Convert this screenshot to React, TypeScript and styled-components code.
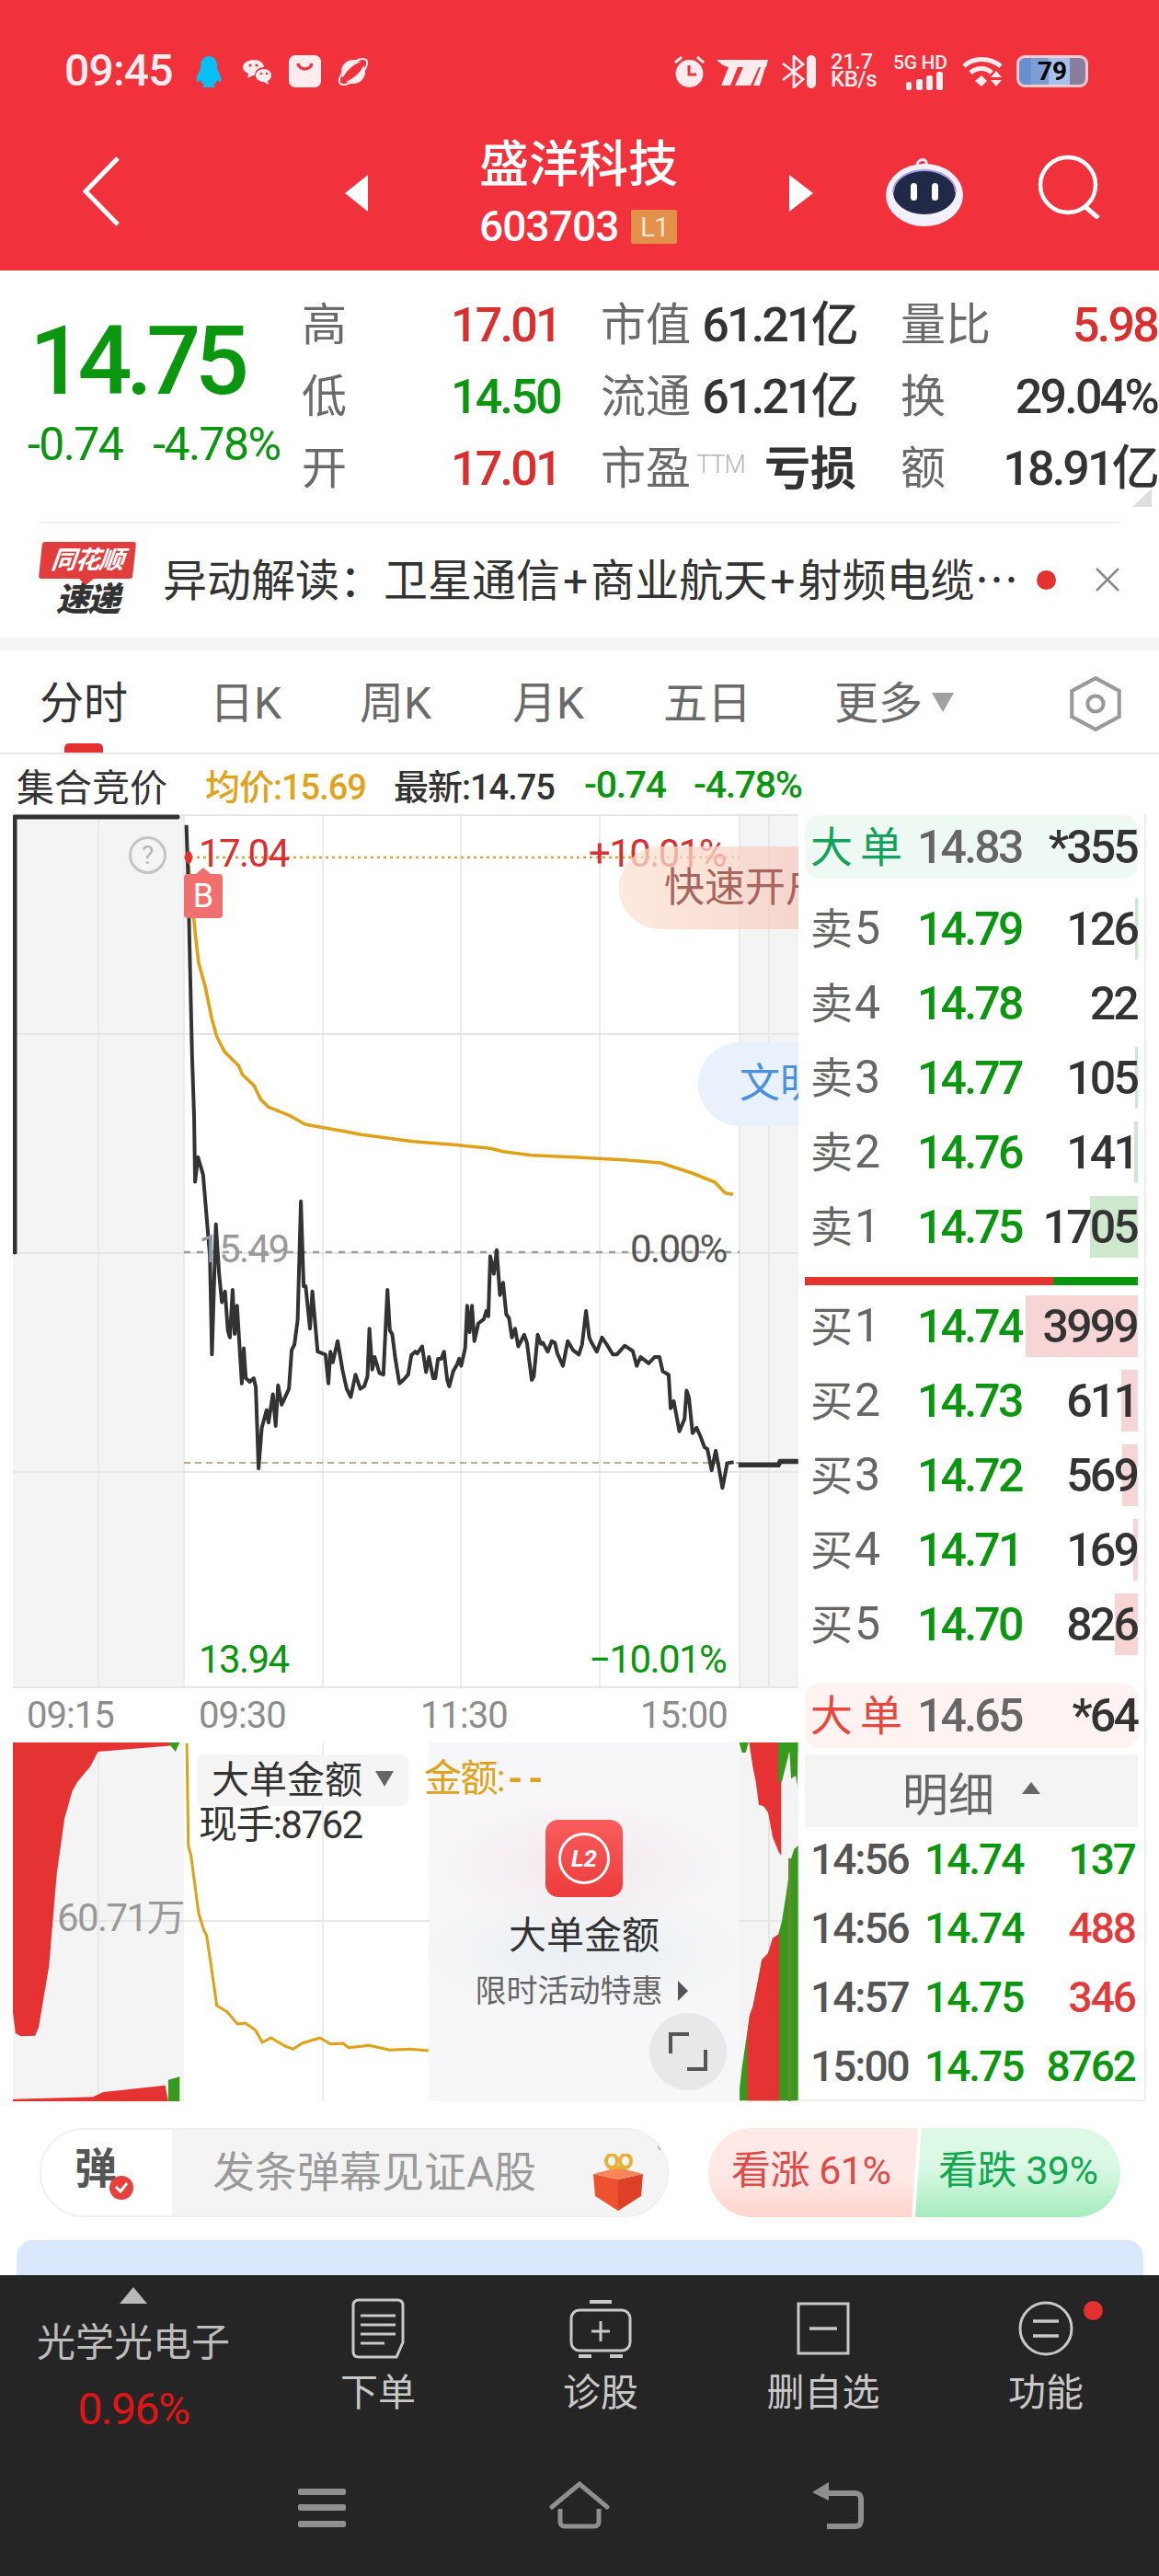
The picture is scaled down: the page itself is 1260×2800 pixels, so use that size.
import React from 'react';
import styled, { createGlobalStyle, css } from 'styled-components';

const GlobalStyle = createGlobalStyle`
  html, body { margin: 0; padding: 0; background: #fff; }
  * { box-sizing: border-box; }
`;

const RED = '#d9302f';
const GREEN = '#0a960f';

const num = css`
  font-size: 50px;
  font-weight: 500;
  letter-spacing: -2.8px;
`;

const numSmall = css`
  font-size: 46px;
  letter-spacing: -2px;
`;

type Pt = [number, number];

// the zoomed crops were traced by hand, these map them back to page coords
const z3 = (p: Pt[]) => p.map(([u, v]) => `${(u / 1.782).toFixed(1)},${(880 + v / 3).toFixed(1)}`);
const z5 = (p: Pt[]) => p.map(([u, v]) => `${(u / 1.782).toFixed(1)},${(1820 + v / 3).toFixed(1)}`);
const z7 = (p: Pt[]) => p.map(([u, v]) => `${(200 + u / 2.306).toFixed(1)},${(1250 + v / 2.6).toFixed(1)}`);
const z9 = (p: Pt[]) => p.map(([u, v]) => `${(760 + u / 3).toFixed(1)},${(1880 + v / 3).toFixed(1)}`);

const pricePoints = [
  ...z3([[361, 50], [364, 200], [368, 500], [372, 800], [376, 1000]]),
  ...z7([[28, 90], [35, 20], [48, 70], [65, 300], [70, 578], [80, 210], [88, 350], [95, 430], [103, 400], [110, 510], [115, 530], [122, 395], [127, 520], [133, 440], [145, 660], [150, 560], [155, 645], [165, 655], [175, 645], [180, 670], [187, 900], [195, 785], [207, 735], [212, 770], [223, 690], [230, 780], [236, 665], [245, 720], [263, 675], [270, 565], [277, 550], [285, 480], [293, 145], [300, 385], [305, 385], [316, 505], [322, 400], [335, 570], [355, 578], [362, 660], [367, 570], [373, 600], [385, 540], [398, 625], [408, 675], [418, 698], [430, 635], [442, 675], [452, 668], [460, 640], [465, 505], [472, 620], [478, 585], [490, 630], [500, 635], [510, 395], [516, 510], [522, 520], [530, 590], [540, 660], [550, 650], [562, 635], [570, 580], [580, 570], [585, 575], [597, 555], [607, 628], [614, 585], [625, 645], [630, 645], [637, 590], [645, 590], [652, 570], [660, 650], [665, 668], [675, 625], [685, 605], [690, 590], [695, 610], [705, 560], [710, 440], [716, 515], [722, 440], [728, 540], [738, 490], [752, 478], [758, 455], [763, 470], [768, 300], [777, 350], [784, 283], [792, 410], [800, 375], [808, 465], [815, 475], [822, 530], [830, 505], [838, 555], [853, 522], [860, 545], [872, 650], [877, 640], [887, 522], [895, 548], [900, 545], [912, 570], [922, 540], [930, 545], [936, 575], [950, 610], [962, 540], [975, 565], [990, 578], [998, 550], [1008, 455], [1016, 530], [1022, 545], [1035, 570], [1048, 530], [1060, 550], [1075, 578], [1085, 578], [1105, 553], [1125, 568], [1135, 610], [1145, 585], [1165, 603], [1180, 585], [1192, 585], [1200, 625], [1215, 635], [1220, 730], [1228, 710], [1242, 795], [1255, 760], [1260, 680], [1266, 700], [1275, 800], [1285, 785], [1295, 810], [1305, 840], [1312, 845], [1323, 905], [1333, 850], [1342, 905], [1350, 955], [1362, 885], [1378, 882]]),
].join(' ');

const afterHours = z7([[1390, 890], [1490, 890], [1495, 880], [1540, 880]]).join(' ');

const avgPoints = z3([[365, 180], [380, 430], [385, 500], [398, 580], [410, 680], [420, 740], [435, 790], [462, 835], [470, 865], [492, 900], [505, 945], [520, 970], [560, 997], [592, 1027], [660, 1047], [700, 1060], [800, 1082], [880, 1093], [950, 1105], [975, 1115], [1030, 1127], [1120, 1134], [1215, 1143], [1280, 1152], [1340, 1185], [1385, 1215], [1405, 1250], [1420, 1255]]).join(' ');

const subAvg = z5([[362, 225], [365, 560], [370, 590], [385, 780], [395, 835], [400, 850], [408, 940], [420, 1080], [440, 1100], [460, 1140], [475, 1137], [495, 1160], [508, 1200], [525, 1185], [550, 1210], [568, 1222], [585, 1203], [620, 1185], [640, 1205], [665, 1203], [675, 1217], [715, 1210], [755, 1225], [795, 1222], [830, 1227]]).join(' ');

const Page = styled.div`
  width: 1260px;
  height: 2800px;
  overflow: hidden;
  display: flex;
  flex-direction: column;
  background: #fff;
  font-family: Roboto, "Noto Sans CJK SC", sans-serif;
  color: #333;
`;

const RedHead = styled.header`
  height: 294px;
  background: #f1313c;
  color: #fff;
  flex: none;
`;

const StatusBar = styled.div`
  height: 140px;
  padding: 60px 0 0 70px;
  display: flex;
  align-items: flex-start;
  color: #ffecee;
`;

const Clock = styled.div`
  font-size: 48px;
  letter-spacing: -0.8px;
  line-height: 34px;
  font-weight: 500;
  width: 142px;
`;

const IconSlot = styled.div<{ $w: number; $ml?: number }>`
  width: ${p => p.$w}px;
  margin-left: ${p => p.$ml || 0}px;
  height: 36px;
  flex: none;
  svg { display: block; }
`;

const Speed = styled.div`
  width: 52px;
  margin-left: 16px;
  font-size: 24px;
  line-height: 19px;
  font-weight: 500;
  letter-spacing: -0.5px;
  margin-top: -2px;
  white-space: nowrap;
`;

const Signal = styled.div`
  width: 60px;
  margin-left: 16px;
  font-size: 21px;
  font-weight: 500;
  line-height: 20px;
  margin-top: -2px;
  white-space: nowrap;
  letter-spacing: -0.3px;
  svg { display: block; margin: 0 0 0 14px; }
`;

const Battery = styled.div`
  width: 78px;
  height: 35px;
  margin-left: 15px;
  border: 3px solid #ffc9cd;
  border-radius: 9px;
  background: linear-gradient(90deg, #6a8fcf 0 18%, #7c9dd6 18% 45%, #a6c2ea 45% 76%, #8a7e9e 76%);
  color: #000;
  font-size: 28px;
  font-weight: 700;
  line-height: 29px;
  text-align: center;
`;

const NavBar = styled.div`
  height: 154px;
  display: flex;
  align-items: flex-start;
  position: relative;
`;

const BackSlot = styled.div`
  width: 375px;
  padding: 30px 0 0 90px;
  svg { display: block; }
`;

const SideTriangle = styled.div<{ $dir: 'l' | 'r' }>`
  width: 0;
  height: 0;
  margin-top: 50px;
  border-top: 20px solid transparent;
  border-bottom: 20px solid transparent;
  ${p => (p.$dir === 'l' ? 'border-right: 25px solid #fff;' : 'border-left: 26px solid #fff;')}
`;

const TitleBox = styled.div`
  width: 458px;
  display: flex;
  flex-direction: column;
  align-items: center;
  padding-top: 9px;
`;

const StockName = styled.div`
  font-size: 54px;
  line-height: 62px;
  font-weight: 500;
  width: 216px;
  white-space: nowrap;
`;

const CodeRow = styled.div`
  display: flex;
  align-items: center;
  gap: 14px;
  margin-top: 15px;
  ${numSmall}
  font-weight: 500;
  letter-spacing: -0.9px;
  line-height: 40px;
  width: 216px;
`;

const LevelBadge = styled.span`
  width: 50px;
  height: 37px;
  background: #e2904a;
  color: #fbe6cf;
  border-radius: 2px;
  font-size: 30px;
  font-weight: 400;
  line-height: 37px;
  text-align: center;
  letter-spacing: -1px;
`;

const RightTools = styled.div`
  margin-left: 79px;
  margin-top: 28px;
  display: flex;
  gap: 81px;
  align-items: flex-start;
  svg { display: block; }
`;

const Quote = styled.section`
  height: 273px;
  flex: none;
  display: flex;
  position: relative;
`;

const PriceCol = styled.div`
  width: 330px;
  padding: 45px 0 0 30px;
  flex: none;
`;

const BigPrice = styled.div`
  font-size: 104px;
  font-weight: 500;
  letter-spacing: -6.6px;
  line-height: 108px;
  color: ${GREEN};
  padding-left: 2px;
`;

const Change = styled.div`
  display: flex;
  gap: 33px;
  margin-top: 13px;
  font-size: 50px;
  letter-spacing: -1.6px;
  line-height: 46px;
  color: ${GREEN};
  white-space: nowrap;
`;

const QuoteGrid = styled.div`
  padding-top: 21px;
  display: grid;
  grid-template-columns: 162px 163px 326px 279px;
  grid-auto-rows: 78px;
  align-items: center;
  margin-left: -2px;
`;

const QLabel = styled.span`
  font-size: 49px;
  line-height: 58px;
  color: #6a6a6a;
  white-space: nowrap;
`;

const QValue = styled.span<{ $c?: string }>`
  font-size: 52px;
  font-weight: 500;
  letter-spacing: -2.8px;
  line-height: 58px;
  color: ${p => p.$c || '#333'};
  white-space: nowrap;
`;

const QPair = styled.div<{ $gap?: boolean }>`
  display: flex;
  justify-content: space-between;
  align-items: center;
  padding-right: ${p => (p.$gap ? 48 : 0)}px;
`;

const Ttm = styled.sup`
  font-size: 27px;
  color: #b5b5b5;
  vertical-align: 12px;
  line-height: 0;
  margin-left: 6px;
  font-family: Roboto, sans-serif;
  font-weight: 300;
  letter-spacing: -1px;
`;

const Strong = styled.span`
  font-size: 50px;
  font-weight: 700;
  line-height: 58px;
  color: #333;
`;

const CornerMark = styled.div`
  position: absolute;
  right: 8px;
  bottom: 16px;
  width: 0;
  height: 0;
  border-left: 21px solid transparent;
  border-bottom: 20px solid #dedede;
`;

const Ticker = styled.section`
  height: 126px;
  flex: none;
  margin: 0;
  position: relative;
  display: flex;
  align-items: center;
  padding: 0 42px 0 44px;
  &::before {
    content: '';
    position: absolute;
    left: 42px;
    right: 42px;
    top: 0;
    height: 2px;
    background: #eeeeee;
  }
`;

const LogoBox = styled.div`
  width: 102px;
  height: 84px;
  margin-top: 2px;
  flex: none;
  display: flex;
  flex-direction: column;
  align-items: center;
`;

const LogoTag = styled.div`
  width: 102px;
  height: 40px;
  background: #e23d3d;
  border-radius: 3px;
  color: #fff;
  font-size: 27px;
  font-weight: 700;
  font-style: italic;
  line-height: 40px;
  text-align: center;
  transform: skewX(-6deg);
  white-space: nowrap;
  letter-spacing: -1px;
  position: relative;
  &::after {
    content: '';
    position: absolute;
    left: 44px;
    top: 40px;
    border-left: 8px solid transparent;
    border-right: 8px solid transparent;
    border-top: 7px solid #e23d3d;
  }
`;

const LogoText = styled.div`
  margin-top: 3px;
  font-size: 36px;
  font-weight: 900;
  font-style: italic;
  line-height: 40px;
  color: #333;
  letter-spacing: -2px;
`;

const TickerText = styled.div`
  margin-left: 31px;
  width: 950px;
  flex: none;
  font-size: 48px;
  line-height: 60px;
  color: #333;
  white-space: nowrap;
  position: relative;
  top: 2px;
`;

const Plus = styled.span`
  margin: 0 3px;
`;

const Dot = styled.span<{ $s: number }>`
  width: ${p => p.$s}px;
  height: ${p => p.$s}px;
  border-radius: 50%;
  background: #e53030;
  flex: none;
`;

const CloseX = styled.div`
  margin-left: auto;
  flex: none;
  svg { display: block; }
`;

const GrayBand = styled.div`
  height: 14px;
  background: #f5f5f5;
  flex: none;
`;

const Tabs = styled.nav`
  height: 113px;
  flex: none;
  display: flex;
  padding: 28px 0 0 43px;
  border-bottom: 2px solid #e6e6e6;
  position: relative;
  &::after {
    content: '';
    position: absolute;
    left: 70px;
    bottom: 0;
    width: 42px;
    height: 10px;
    border-radius: 5px 5px 0 0;
    background: #e53030;
  }
`;

const Tab = styled.div<{ $w: number; $on?: boolean }>`
  width: ${p => p.$w}px;
  font-size: 48px;
  line-height: 60px;
  color: ${p => (p.$on ? '#333' : '#6a6a6a')};
  white-space: nowrap;
  display: flex;
  align-items: flex-start;
  svg { display: block; }
`;

const MoreArrow = styled.span`
  width: 0;
  height: 0;
  margin: 18px 0 0 10px;
  border-left: 12px solid transparent;
  border-right: 12px solid transparent;
  border-top: 21px solid #a0a0a0;
`;

const InfoRow = styled.div`
  height: 65px;
  flex: none;
  display: flex;
  align-items: center;
  padding-left: 18px;
  font-size: 38px;
  font-weight: 500;
  letter-spacing: -1px;
  white-space: nowrap;
`;

const InfoItem = styled.span<{ $c?: string; $w?: number }>`
  color: ${p => p.$c || '#333'};
  width: ${p => p.$w || 0}px;
  flex: none;
`;

const InfoChange = styled(InfoItem)`
  font-size: 41px;
  letter-spacing: -1.3px;
`;

const AuctionTag = styled.span`
  font-size: 41px;
  font-weight: 400;
  letter-spacing: 0;
  color: #333;
  width: 205px;
  flex: none;
`;

const Board = styled.div`
  display: flex;
  padding-left: 14px;
  height: 1399px;
  flex: none;
`;

const ChartCol = styled.div`
  width: 854px;
  flex: none;
`;

const Plot = styled.div<{ $h: number }>`
  position: relative;
  height: ${p => p.$h}px;
  overflow: hidden;
  svg { display: block; }
`;

const PlotLabel = styled.span<{ $x: number; $y: number; $c: string; $s?: number }>`
  position: absolute;
  left: ${p => p.$x - 14}px;
  top: ${p => p.$y}px;
  color: ${p => p.$c};
  font-size: ${p => p.$s || 42}px;
  font-variant-ligatures: none;
  line-height: 40px;
  letter-spacing: -1.6px;
  white-space: nowrap;
`;

const Dashes = styled.span`
  letter-spacing: 6px;
  margin-left: 4px;
  font-weight: 700;
`;

const BuyMark = styled.div`
  position: absolute;
  left: 186px;
  top: 65px;
  width: 42px;
  height: 48px;
  background: #f07070;
  border-radius: 4px;
  color: #fff;
  font-size: 36px;
  line-height: 48px;
  text-align: center;
  &::before {
    content: '';
    position: absolute;
    left: 13px;
    top: -7px;
    border-left: 8px solid transparent;
    border-right: 8px solid transparent;
    border-bottom: 7px solid #f07070;
  }
`;

const Help = styled.div`
  position: absolute;
  left: 126px;
  top: 24px;
  width: 41px;
  height: 41px;
  border-radius: 50%;
  border: 3px solid #c4c4c4;
  color: #b5b5b5;
  font-size: 28px;
  line-height: 35px;
  text-align: center;
`;

const Pill = styled.div<{ $x: number; $y: number; $h: number; $bg: string; $c: string }>`
  position: absolute;
  left: ${p => p.$x - 14}px;
  top: ${p => p.$y}px;
  right: 0;
  height: ${p => p.$h}px;
  border-radius: ${p => p.$h / 2}px 0 0 ${p => p.$h / 2}px;
  background: ${p => p.$bg};
  color: ${p => p.$c};
  font-size: 44px;
  line-height: ${p => p.$h}px;
  overflow: hidden;
  white-space: nowrap;
`;

const PillText = styled.span<{ $pad: number }>`
  display: block;
  padding-left: ${p => p.$pad}px;
`;

const TimeAxis = styled.div`
  height: 59px;
  display: grid;
  grid-template-columns: 187px 241px 239px 1fr;
  padding-left: 15px;
  font-size: 40px;
  line-height: 59px;
  color: #8c8c8c;
  letter-spacing: -1px;
  background: #fff;
`;

const SubTag = styled.div`
  position: absolute;
  left: 200px;
  top: 13px;
  width: 230px;
  height: 56px;
  border-radius: 8px;
  background: #f5f5f5;
  font-size: 41px;
  line-height: 56px;
  color: #333;
  padding-left: 16px;
  display: flex;
  align-items: center;
`;

const TagArrow = styled.span`
  width: 0;
  height: 0;
  margin-left: 14px;
  margin-bottom: 4px;
  border-left: 10px solid transparent;
  border-right: 10px solid transparent;
  border-top: 17px solid #666;
`;

const Promo = styled.div`
  position: absolute;
  left: 452px;
  top: 0;
  width: 338px;
  height: 100%;
  background:
    radial-gradient(ellipse 170px 70px at 50% 34%, rgba(240, 224, 228, 0.6), transparent),
    radial-gradient(ellipse 190px 70px at 50% 58%, rgba(226, 236, 240, 0.7), transparent),
    #f7f6f8;
  display: flex;
  flex-direction: column;
  align-items: center;
  padding-top: 84px;
`;

const L2Icon = styled.div`
  width: 84px;
  height: 84px;
  border-radius: 14px;
  background: linear-gradient(180deg, #f85d5d, #ee3c3c);
  display: flex;
  align-items: center;
  justify-content: center;
`;

const L2Ring = styled.div`
  width: 56px;
  height: 56px;
  border-radius: 50%;
  border: 3px solid #fff;
  color: #fff;
  font-size: 26px;
  font-weight: 700;
  font-style: italic;
  line-height: 50px;
  text-align: center;
`;

const PromoTitle = styled.div`
  margin-top: 17px;
  font-size: 41px;
  line-height: 50px;
  color: #333;
`;

const PromoSub = styled.div`
  margin-top: 13px;
  font-size: 34px;
  line-height: 44px;
  color: #666;
  display: flex;
  align-items: center;
  margin-right: 6px;
`;

const SubArrow = styled.span`
  margin-left: 16px;
  width: 0;
  height: 0;
  border-top: 11px solid transparent;
  border-bottom: 11px solid transparent;
  border-left: 11px solid #555;
`;

const Expand = styled.div`
  position: absolute;
  right: 14px;
  bottom: 12px;
  width: 84px;
  height: 84px;
  border-radius: 50%;
  background: #e8e8e8;
  display: flex;
  align-items: center;
  justify-content: center;
`;

const Book = styled.aside`
  width: 378px;
  flex: none;
  padding: 1px 7px 0 7px;
  border-right: 2px solid #eeeeee;
  border-bottom: 2px solid #eeeeee;
  height: 1399px;
`;

const BigOrder = styled.div<{ $c: string; $bg: string; $mt?: number; $h: number }>`
  height: ${p => p.$h}px;
  margin-top: ${p => p.$mt || 0}px;
  background: ${p => p.$bg};
  border-radius: 16px;
  display: grid;
  grid-template-columns: 116px 1fr auto;
  align-items: center;
  padding: 0 1px 0 6px;
  line-height: 60px;
  white-space: nowrap;
  b {
    font-weight: 400;
    font-size: 46px;
    letter-spacing: 8px;
    color: ${p => p.$c};
  }
`;

const OrderPrice = styled.span`
  ${num}
  color: #666;
`;

const OrderVol = styled.span`
  ${num}
  color: #333;
`;

const LevelList = styled.div<{ $mt: number }>`
  margin-top: ${p => p.$mt}px;
  display: flex;
  flex-direction: column;
  gap: 14px;
`;

const Level = styled.div`
  height: 67px;
  position: relative;
  display: grid;
  grid-template-columns: 116px 1fr auto;
  align-items: center;
  padding: 0 1px 0 6px;
  white-space: nowrap;
  line-height: 60px;
`;

const LevelBar = styled.div<{ $c: string }>`
  position: absolute;
  right: 0;
  top: 0;
  bottom: 0;
  background: ${p => p.$c};
`;

const LevelName = styled.span`
  position: relative;
  font-size: 46px;
  color: #666;
  i {
    font-style: normal;
    margin-left: 2px;
    font-size: 50px;
    font-family: Roboto, sans-serif;
  }
`;

const LevelPrice = styled.span`
  position: relative;
  ${num}
  color: ${GREEN};
`;

const LevelVol = styled.span`
  position: relative;
  ${num}
  color: #333;
`;

const SplitBar = styled.div`
  margin-top: 21px;
  height: 9px;
  display: flex;
`;

const SplitPart = styled.div<{ $w: number; $c: string }>`
  width: ${p => p.$w}px;
  background: ${p => p.$c};
`;

const DetailHead = styled.div`
  margin-top: 7px;
  height: 79px;
  background: #f4f4f4;
  display: flex;
  align-items: center;
  padding-left: 106px;
  font-size: 50px;
  color: #666;
`;

const DetailArrow = styled.span`
  margin-left: 30px;
  margin-bottom: 6px;
  width: 0;
  height: 0;
  border-left: 10px solid transparent;
  border-right: 10px solid transparent;
  border-bottom: 13px solid #666;
`;

const DetailRow = styled.div`
  height: 75px;
  display: grid;
  grid-template-columns: 124px 1fr auto;
  align-items: center;
  padding: 0 3px 0 6px;
  line-height: 60px;
  position: relative;
  top: -3px;
  font-weight: 500;
`;

const DetailTime = styled.span`
  ${numSmall}
  color: #555;
`;

const DetailPrice = styled.span`
  ${numSmall}
  color: ${GREEN};
`;

const DetailVol = styled.span<{ $c: string }>`
  ${numSmall}
  color: ${p => p.$c};
`;

const Barrage = styled.section`
  height: 152px;
  flex: none;
  display: flex;
  padding: 29px 42px 0 43px;
`;

const BarrageBox = styled.div`
  width: 684px;
  height: 97px;
  border: 2px solid #efefef;
  border-radius: 48px;
  display: flex;
  overflow: hidden;
  position: relative;
`;

const BarrageIcon = styled.div`
  width: 142px;
  flex: none;
  background: #fff;
  padding-left: 36px;
  color: #555;
  font-size: 46px;
  font-weight: 700;
  line-height: 84px;
  position: relative;
`;

const CheckBadge = styled.span`
  position: absolute;
  left: 74px;
  top: 50px;
  width: 26px;
  height: 26px;
  border-radius: 50%;
  background: #e5403b;
  display: flex;
  align-items: center;
  justify-content: center;
  svg { display: block; }
`;

const BarrageInput = styled.div`
  flex: 1;
  background: #f4f4f4;
  padding-left: 44px;
  font-size: 46px;
  line-height: 93px;
  color: #9a9a9a;
  white-space: nowrap;
  display: flex;
`;

const GiftSlot = styled.div`
  margin-left: 62px;
  padding-top: 26px;
  svg { display: block; }
`;

const BarrageDot = styled.span`
  position: absolute;
  left: 670px;
  top: 11px;
  width: 12px;
  height: 12px;
  border-radius: 50%;
  background: #e53030;
`;

const Vote = styled.div`
  margin-left: 43px;
  width: 448px;
  height: 97px;
  display: flex;
  border-radius: 48px;
  overflow: hidden;
  font-size: 43px;
  line-height: 92px;
  white-space: nowrap;
`;

const VoteUp = styled.div`
  width: 228px;
  flex: none;
  padding-left: 25px;
  color: #e04a48;
  background: linear-gradient(180deg, #ffe9e6 55%, #ffd3cc);
  clip-path: polygon(0 0, 100% 0, 97% 100%, 0 100%);
  letter-spacing: -0.5px;
`;

const VoteDown = styled.div`
  flex: 1;
  margin-left: -3px;
  padding-left: 25px;
  color: #0fa84e;
  background: linear-gradient(180deg, #dcf9e6 40%, #a6ecbe);
  clip-path: polygon(3% 0, 100% 0, 100% 100%, 0 100%);
  letter-spacing: -0.5px;
`;

const BlueCard = styled.div`
  height: 38px;
  flex: none;
  margin: -1px 17px 0 18px;
  background: #d9e8fb;
  border-radius: 18px 18px 0 0;
`;

const Footer = styled.footer`
  flex: 1;
  background: #252525;
  color: #c4c4c4;
`;

const ActionBar = styled.div`
  height: 224px;
  display: grid;
  grid-template-columns: 290px repeat(4, 242px);
`;

const SectorCell = styled.div`
  display: flex;
  flex-direction: column;
  align-items: center;
  padding-top: 13px;
`;

const SectorArrow = styled.span`
  width: 0;
  height: 0;
  border-left: 15px solid transparent;
  border-right: 15px solid transparent;
  border-bottom: 18px solid #b8b8b8;
`;

const SectorName = styled.div`
  margin-top: 18px;
  font-size: 42px;
  line-height: 50px;
  color: #bdbdbd;
`;

const SectorRate = styled.div`
  margin-top: 22px;
  font-size: 48px;
  line-height: 50px;
  letter-spacing: -1.5px;
  color: #e01515;
`;

const Action = styled.div`
  display: flex;
  flex-direction: column;
  align-items: center;
  padding-top: 24px;
  position: relative;
  svg { display: block; }
`;

const ActionIcon = styled.div`
  height: 68px;
  display: flex;
  align-items: center;
`;

const ActionLabel = styled.div`
  margin-top: 11px;
  font-size: 41px;
  line-height: 50px;
  color: #c8c8c8;
`;

const NotifyDot = styled.span`
  position: absolute;
  left: 162px;
  top: 28px;
  width: 21px;
  height: 21px;
  border-radius: 50%;
  background: #e53030;
`;

const SystemNav = styled.div`
  display: flex;
  align-items: flex-start;
  padding-left: 324px;
  svg { display: block; }
`;

const stroke = { fill: 'none', stroke: '#c8c8c8', strokeWidth: 3 };

function StatusLeftIcons() {
  return (
    <>
      <IconSlot $w={30}>
        <svg width="30" height="36" viewBox="0 0 30 36">
          <path d="M15 1c6 0 9 5 9 11 0 3 1 5 3 9 2 5 2 8 0 8l-3-2c-1 3-2 4-4 5l2 2c0 1-1 1-3 1h-8c-2 0-3 0-3-1l2-2c-2-1-3-2-4-5l-3 2c-2 0-2-3 0-8 2-4 3-6 3-9C6 6 9 1 15 1z" fill="#09c0f5" />
        </svg>
      </IconSlot>
      <IconSlot $w={33} $ml={21}>
        <svg width="33" height="36" viewBox="0 0 33 36">
          <path d="M13 5c7 0 11 4 11 8-5 0-10 3-10 9H12L6 25l1-5C3 18 1 16 1 13c0-4 5-8 12-8z" fill="#ffecee" />
          <path d="M24 15c5 0 8 3 8 7 0 3-2 5-4 6l1 4-5-3c-5 0-9-3-9-7 0-4 4-7 9-7z" fill="#ffecee" />
          <circle cx="9" cy="11" r="1.6" fill="#f1313c" />
          <circle cx="16" cy="11" r="1.6" fill="#f1313c" />
          <circle cx="21" cy="20" r="1.3" fill="#f1313c" />
          <circle cx="27" cy="20" r="1.3" fill="#f1313c" />
        </svg>
      </IconSlot>
      <IconSlot $w={35} $ml={18}>
        <svg width="35" height="36" viewBox="0 0 35 36">
          <rect x="0" y="0" width="35" height="35" rx="7" fill="#ffecee" />
          <path d="M10 9c1 8 14 8 15 0" fill="none" stroke="#f1313c" strokeWidth="3.4" />
        </svg>
      </IconSlot>
      <IconSlot $w={36} $ml={17}>
        <svg width="36" height="36" viewBox="0 0 36 36">
          <circle cx="18" cy="18" r="13" fill="#ffecee" />
          <ellipse cx="18" cy="18" rx="15" ry="5" transform="rotate(-42 18 18)" fill="#f1313c" />
          <ellipse cx="18" cy="18" rx="19" ry="8" transform="rotate(-42 18 18)" fill="none" stroke="#ffecee" strokeWidth="2" />
        </svg>
      </IconSlot>
    </>
  );
}

function StatusRightIcons() {
  return (
    <>
      <IconSlot $w={35} $ml={330}>
        <svg width="35" height="36" viewBox="0 0 35 36">
          <circle cx="17.5" cy="20" r="15" fill="#ffecee" />
          <path d="M17 11v10h8" fill="none" stroke="#f1313c" strokeWidth="3" />
          <path d="M2 8l7-6M33 8l-7-6" stroke="#ffecee" strokeWidth="3" />
        </svg>
      </IconSlot>
      <IconSlot $w={56} $ml={12}>
        <svg width="56" height="36" viewBox="0 0 56 36">
          <path d="M0 5h56l-2 8H40l-9 20H20l9-20h-6l-8 20H5l8-20C8 12 4 9 0 5z" fill="#ffecee" />
          <path d="M38 13h8l-9 20h-8zM48 13h5l-6 20h-7z" fill="#ffecee" />
        </svg>
      </IconSlot>
      <IconSlot $w={37} $ml={15}>
        <svg width="37" height="36" viewBox="0 0 37 36">
          <path d="M1 9l22 17-10 9V1l10 9L1 27" fill="none" stroke="#ffecee" strokeWidth="2.8" />
          <rect x="27" y="0" width="10" height="36" rx="5" fill="#ffecee" />
        </svg>
      </IconSlot>
      <Speed>
        21.7
        <br />
        KB/s
      </Speed>
      <Signal>
        5G HD
        <svg width="42" height="20" viewBox="0 0 42 20">
          <rect x="0" y="11" width="6" height="9" rx="2.5" fill="#ffecee" />
          <rect x="11" y="8" width="7" height="12" rx="2.5" fill="#ffecee" />
          <rect x="22" y="4" width="7" height="16" rx="2.5" fill="#ffecee" />
          <rect x="33" y="0" width="7" height="20" rx="2.5" fill="#ffecee" />
        </svg>
      </Signal>
      <IconSlot $w={44} $ml={15}>
        <svg width="44" height="36" viewBox="0 0 44 36">
          <path d="M2 12C12 2 30 2 42 12" fill="none" stroke="#ffecee" strokeWidth="5" />
          <path d="M9 19c7-6 17-6 23 0" fill="none" stroke="#ffecee" strokeWidth="5" />
          <path d="M14 28l7-6 6 6-6 6z" fill="#ffecee" />
          <path d="M37 17l6 7H31zM31 27h12l-6 7z" fill="#ffecee" />
        </svg>
      </IconSlot>
      <Battery>79</Battery>
    </>
  );
}

function Robot() {
  return (
    <svg width="84" height="78" viewBox="0 0 84 78">
      <path d="M34 12c0-6 8-9 10-4 1 3-3 5-4 2" fill="none" stroke="#e8e4f8" strokeWidth="3" />
      <ellipse cx="42" cy="44" rx="42" ry="34" fill="#f2f0fb" />
      <ellipse cx="42" cy="41" rx="34" ry="24" fill="#202a47" />
      <path d="M8 41a34 24 0 0 1 68 0" fill="none" stroke="#a59ce8" strokeWidth="2" />
      <rect x="27" y="31" width="7" height="19" rx="3.5" fill="#fff" />
      <rect x="50" y="31" width="7" height="19" rx="3.5" fill="#fff" />
    </svg>
  );
}

function Gift() {
  return (
    <svg width="56" height="62" viewBox="0 0 56 62">
      <ellipse cx="20" cy="8" rx="6" ry="7" fill="none" stroke="#e6b135" strokeWidth="4" />
      <ellipse cx="35" cy="8" rx="6" ry="7" fill="none" stroke="#e6b135" strokeWidth="4" />
      <path d="M0 22l27 6v34L2 46z" fill="#ec5130" />
      <path d="M54 22l-27 6v34l25-16z" fill="#dc4128" />
      <path d="M0 22l27-7 27 7-27 6z" fill="#f6865a" />
      <path d="M17 16c4-2 16-2 20 0" fill="none" stroke="#e6b135" strokeWidth="4" />
    </svg>
  );
}

export default function App() {
  const sell: [string, string, string, number][] = [
    ['5', '14.79', '126', 3],
    ['4', '14.78', '22', 0],
    ['3', '14.77', '105', 3],
    ['2', '14.76', '141', 4],
    ['1', '14.75', '1705', 52],
  ];
  const buy: [string, string, string, number][] = [
    ['1', '14.74', '3999', 122],
    ['2', '14.73', '611', 18],
    ['3', '14.72', '569', 17],
    ['4', '14.71', '169', 5],
    ['5', '14.70', '826', 25],
  ];
  const ticks: [string, string, string, string][] = [
    ['14:56', '14.74', '137', GREEN],
    ['14:56', '14.74', '488', '#e03a3a'],
    ['14:57', '14.75', '346', '#e03a3a'],
    ['15:00', '14.75', '8762', GREEN],
  ];

  return (
    <Page>
      <GlobalStyle />
      <RedHead>
        <StatusBar>
          <Clock>09:45</Clock>
          <StatusLeftIcons />
          <StatusRightIcons />
        </StatusBar>
        <NavBar>
          <BackSlot>
            <svg width="40" height="76" viewBox="0 0 40 76">
              <path d="M38 2L3 38l35 36" fill="none" stroke="#fff" strokeWidth="5" />
            </svg>
          </BackSlot>
          <SideTriangle $dir="l" />
          <TitleBox>
            <StockName>盛洋科技</StockName>
            <CodeRow>
              603703
              <LevelBadge>L1</LevelBadge>
            </CodeRow>
          </TitleBox>
          <SideTriangle $dir="r" />
          <RightTools>
            <Robot />
            <svg width="68" height="70" viewBox="0 0 68 70">
              <circle cx="33" cy="33" r="30" fill="none" stroke="#fff" strokeWidth="4.5" />
              <path d="M51 56l15 13" stroke="#fff" strokeWidth="5" />
            </svg>
          </RightTools>
        </NavBar>
      </RedHead>

      <Quote>
        <PriceCol>
          <BigPrice>14.75</BigPrice>
          <Change>
            <span>-0.74</span>
            <span>-4.78%</span>
          </Change>
        </PriceCol>
        <QuoteGrid>
          <QLabel>高</QLabel>
          <QValue $c={RED}>17.01</QValue>
          <QPair $gap>
            <QLabel>市值</QLabel>
            <QValue>61.21亿</QValue>
          </QPair>
          <QPair>
            <QLabel>量比</QLabel>
            <QValue $c={RED}>5.98</QValue>
          </QPair>
          <QLabel>低</QLabel>
          <QValue $c={GREEN}>14.50</QValue>
          <QPair $gap>
            <QLabel>流通</QLabel>
            <QValue>61.21亿</QValue>
          </QPair>
          <QPair>
            <QLabel>换</QLabel>
            <QValue>29.04%</QValue>
          </QPair>
          <QLabel>开</QLabel>
          <QValue $c={RED}>17.01</QValue>
          <QPair $gap>
            <QLabel>
              市盈<Ttm>TTM</Ttm>
            </QLabel>
            <Strong>亏损</Strong>
          </QPair>
          <QPair>
            <QLabel>额</QLabel>
            <QValue>18.91亿</QValue>
          </QPair>
        </QuoteGrid>
        <CornerMark />
      </Quote>

      <Ticker>
        <LogoBox>
          <LogoTag>同花顺</LogoTag>
          <LogoText>速递</LogoText>
        </LogoBox>
        <TickerText>
          异动解读：卫星通信<Plus>+</Plus>商业航天<Plus>+</Plus>射频电缆⋯
        </TickerText>
        <Dot $s={21} />
        <CloseX>
          <svg width="28" height="28" viewBox="0 0 28 28">
            <path d="M2 2l24 24M26 2L2 26" stroke="#8a8a8a" strokeWidth="2.6" />
          </svg>
        </CloseX>
      </Ticker>

      <GrayBand />

      <Tabs>
        <Tab $w={185} $on>分时</Tab>
        <Tab $w={163}>日K</Tab>
        <Tab $w={166}>周K</Tab>
        <Tab $w={164}>月K</Tab>
        <Tab $w={186}>五日</Tab>
        <Tab $w={254}>
          更多
          <MoreArrow />
        </Tab>
        <Tab $w={60}>
          <svg width="60" height="60" viewBox="0 0 56 56">
            <path d="M28 2l24 13v26L28 54 4 41V15z" fill="none" stroke="#999" strokeWidth="3.8" />
            <circle cx="28" cy="28" r="8" fill="none" stroke="#999" strokeWidth="3.8" />
          </svg>
        </Tab>
      </Tabs>

      <InfoRow>
        <AuctionTag>集合竞价</AuctionTag>
        <InfoItem $c="#e0a21a" $w={205}>均价:15.69</InfoItem>
        <InfoItem $w={207}>最新:14.75</InfoItem>
        <InfoChange $c={GREEN} $w={119}>-0.74</InfoChange>
        <InfoChange $c={GREEN}>-4.78%</InfoChange>
      </InfoRow>

      <Board>
        <ChartCol>
          <Plot $h={950}>
            <svg width="854" height="950" viewBox="14 885 854 950">
              <rect x="14" y="885" width="186" height="950" fill="#f4f4f4" />
              <rect x="804" y="885" width="64" height="950" fill="#f4f4f4" />
              {[107, 200, 351, 501, 652, 804, 836].map(x => (
                <line key={x} x1={x} x2={x} y1="885" y2="1837" stroke="#e6e6e6" strokeWidth="1.5" />
              ))}
              {[886, 1124, 1362, 1600, 1834].map(y => (
                <line key={y} x1="14" x2="868" y1={y} y2={y} stroke="#e6e6e6" strokeWidth="2" />
              ))}
              <line x1="200" x2="804" y1="932" y2="932" stroke="#dd9f35" strokeWidth="2.5" strokeDasharray="3 4" />
              <line x1="200" x2="804" y1="1361" y2="1361" stroke="#a0a0a0" strokeWidth="2.5" strokeDasharray="7 7" />
              <line x1="200" x2="804" y1="1590" y2="1590" stroke="#bfae8a" strokeWidth="2" strokeDasharray="7 5" />
              <polyline points="16,1361 16,888 193,888" fill="none" stroke="#333" strokeWidth="5" strokeLinejoin="round" strokeLinecap="round" />
              <polyline points={avgPoints} fill="none" stroke="#e0a017" strokeWidth="3.6" strokeLinejoin="round" />
              <polyline points={pricePoints} fill="none" stroke="#333" strokeWidth="4" strokeLinejoin="round" />
              <polyline points={afterHours} fill="none" stroke="#333" strokeWidth="5.5" />
              <ellipse cx="205" cy="932" rx="4" ry="7" fill="#e03030" />
            </svg>
            <Help>?</Help>
            <PlotLabel $x={216} $y={23} $c={RED}>17.04</PlotLabel>
            <PlotLabel $x={640} $y={23} $c={RED}>+10.01%</PlotLabel>
            <PlotLabel $x={216} $y={453} $c="#999">15.49</PlotLabel>
            <PlotLabel $x={685} $y={453} $c="#555">0.00%</PlotLabel>
            <PlotLabel $x={216} $y={899} $c={GREEN}>13.94</PlotLabel>
            <PlotLabel $x={640} $y={899} $c={GREEN}>−10.01%</PlotLabel>
            <Pill $x={673} $y={35} $h={90} $bg="linear-gradient(90deg, rgba(252,226,208,0.72), rgba(245,205,195,0.78))" $c="#a9645c">
              <PillText $pad={49}>快速开户</PillText>
            </Pill>
            <Pill $x={759} $y={248} $h={91} $bg="#e8f1fc" $c="#4a90e0">
              <PillText $pad={45}>文明</PillText>
            </Pill>
            <BuyMark>B</BuyMark>
          </Plot>

          <TimeAxis>
            <span>09:15</span>
            <span>09:30</span>
            <span>11:30</span>
            <span>15:00</span>
          </TimeAxis>

          <Plot $h={390}>
            <svg width="854" height="390" viewBox="14 1894 854 390">
              <rect x="14" y="1894" width="186" height="390" fill="#f4f4f4" />
              <rect x="804" y="1894" width="64" height="390" fill="#f4f4f4" />
              <line x1="107" x2="107" y1="1894" y2="2284" stroke="#e6e6e6" strokeWidth="1.5" />
              <line x1="351" x2="351" y1="1894" y2="2284" stroke="#e6e6e6" strokeWidth="1.5" />
              <line x1="836" x2="836" y1="1894" y2="2284" stroke="#e0e0e0" strokeWidth="1.5" />
              <line x1="14" x2="868" y1="2088" y2="2088" stroke="#e6e6e6" strokeWidth="2" />
              <polygon points={z5([[24, 222], [330, 222], [335, 232], [190, 252], [175, 300], [150, 350], [140, 380], [125, 470], [110, 650], [95, 950], [75, 1150], [68, 1178], [40, 1180], [30, 1170], [24, 1090]]).join(' ')} fill="#e53232" />
              <polygon points={z5([[325, 222], [348, 222], [340, 252], [330, 232]]).join(' ')} fill="#379a1e" />
              <polygon points={z5([[24, 1392], [24, 1385], [180, 1378], [200, 1362], [320, 1340], [326, 1392]]).join(' ')} fill="#e53232" />
              <polygon points={z5([[326, 1322], [348, 1312], [348, 1392], [326, 1392]]).join(' ')} fill="#379a1e" />
              <polygon points={z9([[130, 40], [162, 40], [152, 75], [140, 75]]).join(' ')} fill="#379a1e" />
              <polygon points={z9([[163, 40], [258, 40], [268, 170], [268, 410], [260, 400], [240, 350], [225, 270], [210, 250], [195, 245], [185, 170], [175, 120]]).join(' ')} fill="#e53232" />
              <polygon points={z9([[258, 40], [323, 40], [320, 185], [315, 150], [300, 160], [295, 70], [270, 170], [258, 170]]).join(' ')} fill="#379a1e" />
              <polygon points={z9([[130, 1210], [130, 1190], [140, 1100], [155, 1000], [165, 930], [175, 905], [190, 830], [205, 750], [225, 730], [240, 680], [258, 670], [270, 625], [285, 530], [300, 420], [310, 390], [323, 378], [323, 1210]]).join(' ')} fill="#379a1e" />
              <polygon points={z9([[157, 1210], [157, 1000], [165, 930], [175, 905], [190, 830], [205, 750], [225, 730], [240, 680], [262, 665], [262, 1210]]).join(' ')} fill="#e53232" />
              <rect x="857" y="2020" width="3" height="264" fill="#6a8a30" />
              <polyline points={subAvg} fill="none" stroke="#e0a017" strokeWidth="3" strokeLinejoin="round" />
            </svg>
            <SubTag>
              大单金额
              <TagArrow />
            </SubTag>
            <PlotLabel $x={216} $y={70} $c="#333">现手:8762</PlotLabel>
            <PlotLabel $x={62} $y={171} $c="#999">60.71万</PlotLabel>
            <Promo>
              <L2Icon>
                <L2Ring>L2</L2Ring>
              </L2Icon>
              <PromoTitle>大单金额</PromoTitle>
              <PromoSub>
                限时活动特惠
                <SubArrow />
              </PromoSub>
              <Expand>
                <svg width="44" height="44" viewBox="0 0 44 44">
                  <path d="M3 24V3h20M41 20v21H21" fill="none" stroke="#555" strokeWidth="4" />
                </svg>
              </Expand>
            </Promo>
            <PlotLabel $x={461} $y={19} $c="#e0a21a" $s={41}>金额:<Dashes>--</Dashes></PlotLabel>
          </Plot>
        </ChartCol>

        <Book>
          <BigOrder $c="#12a35a" $bg="#eff9f3" $h={69}>
            <b>大单</b>
            <OrderPrice>14.83</OrderPrice>
            <OrderVol>*355</OrderVol>
          </BigOrder>
          <LevelList $mt={21}>
            {sell.map(([n, p, v, w]) => (
              <Level key={n}>
                <LevelBar $c="#cde8cd" style={{ width: w }} />
                <LevelName>卖<i>{n}</i></LevelName>
                <LevelPrice>{p}</LevelPrice>
                <LevelVol>{v}</LevelVol>
              </Level>
            ))}
          </LevelList>
          <SplitBar>
            <SplitPart $w={271} $c="#e5342f" />
            <SplitPart $w={93} $c={GREEN} />
          </SplitBar>
          <LevelList $mt={11}>
            {buy.map(([n, p, v, w]) => (
              <Level key={n}>
                <LevelBar $c="#f8d5d5" style={{ width: w }} />
                <LevelName>买<i>{n}</i></LevelName>
                <LevelPrice>{p}</LevelPrice>
                <LevelVol>{v}</LevelVol>
              </Level>
            ))}
          </LevelList>
          <BigOrder $c="#e8473f" $bg="#fff3f2" $h={70} $mt={31}>
            <b>大单</b>
            <OrderPrice>14.65</OrderPrice>
            <OrderVol>*64</OrderVol>
          </BigOrder>
          <DetailHead>
            明细
            <DetailArrow />
          </DetailHead>
          {ticks.map(([t, p, v, c], i) => (
            <DetailRow key={i}>
              <DetailTime>{t}</DetailTime>
              <DetailPrice>{p}</DetailPrice>
              <DetailVol $c={c}>{v}</DetailVol>
            </DetailRow>
          ))}
        </Book>
      </Board>

      <Barrage>
        <BarrageBox>
          <BarrageIcon>
            弹
            <CheckBadge>
              <svg width="16" height="14" viewBox="0 0 16 14">
                <path d="M2 6l5 5 7-9" fill="none" stroke="#fff" strokeWidth="3" />
              </svg>
            </CheckBadge>
          </BarrageIcon>
          <BarrageInput>
            发条弹幕见证A股
            <GiftSlot>
              <Gift />
            </GiftSlot>
          </BarrageInput>
          <BarrageDot />
        </BarrageBox>
        <Vote>
          <VoteUp>看涨 61%</VoteUp>
          <VoteDown>看跌 39%</VoteDown>
        </Vote>
      </Barrage>

      <BlueCard />

      <Footer>
        <ActionBar>
          <SectorCell>
            <SectorArrow />
            <SectorName>光学光电子</SectorName>
            <SectorRate>0.96%</SectorRate>
          </SectorCell>
          <Action>
            <ActionIcon>
              <svg width="58" height="66" viewBox="0 0 58 66">
                <path d="M8 2h42c4 0 6 2 6 6v40l-7 16H8c-4 0-6-2-6-6V8c0-4 2-6 6-6z" {...stroke} />
                <path d="M10 19h38M10 29h38M10 39h38M10 49h26" stroke="#c8c8c8" strokeWidth="3" />
              </svg>
            </ActionIcon>
            <ActionLabel>下单</ActionLabel>
          </Action>
          <Action>
            <ActionIcon>
              <svg width="68" height="64" viewBox="0 0 68 64">
                <path d="M22 3h24" stroke="#c8c8c8" strokeWidth="4" />
                <rect x="2" y="12" width="64" height="44" rx="9" {...stroke} />
                <path d="M34 24v22M24 35h20" stroke="#c8c8c8" strokeWidth="3" />
                <path d="M10 62h14M44 62h14" stroke="#c8c8c8" strokeWidth="4" />
              </svg>
            </ActionIcon>
            <ActionLabel>诊股</ActionLabel>
          </Action>
          <Action>
            <ActionIcon>
              <svg width="58" height="58" viewBox="0 0 58 58">
                <rect x="2" y="2" width="54" height="54" {...stroke} />
                <path d="M14 29h30" stroke="#c8c8c8" strokeWidth="3.5" />
              </svg>
            </ActionIcon>
            <ActionLabel>删自选</ActionLabel>
          </Action>
          <Action>
            <ActionIcon>
              <svg width="60" height="60" viewBox="0 0 60 60">
                <circle cx="30" cy="30" r="28" {...stroke} />
                <path d="M16 22h28M16 38h28" stroke="#c8c8c8" strokeWidth="3.5" />
              </svg>
            </ActionIcon>
            <ActionLabel>功能</ActionLabel>
            <NotifyDot />
          </Action>
        </ActionBar>
        <SystemNav>
          <svg width="52" height="42" viewBox="0 0 52 42" style={{ marginTop: 8 }}>
            <rect x="0" y="0" width="52" height="7" rx="2" fill="#8f8f8f" />
            <rect x="0" y="17" width="52" height="7" rx="2" fill="#8f8f8f" />
            <rect x="0" y="35" width="52" height="7" rx="2" fill="#8f8f8f" />
          </svg>
          <svg width="66" height="52" viewBox="0 0 66 52" style={{ marginLeft: 221 }}>
            <path d="M3 28L33 3l30 25" fill="none" stroke="#8f8f8f" strokeWidth="5" strokeLinecap="round" />
            <path d="M12 30v14c0 3 2 5 5 5h32c3 0 5-2 5-5V30" fill="none" stroke="#8f8f8f" strokeWidth="5" />
          </svg>
          <svg width="56" height="52" viewBox="0 0 56 52" style={{ marginLeft: 220 }}>
            <path d="M18 1L0 12l18 9z" fill="#8f8f8f" />
            <path d="M12 13h34c5 0 7 2 7 7v22c0 5-2 7-7 7H16" fill="none" stroke="#8f8f8f" strokeWidth="6" />
          </svg>
        </SystemNav>
      </Footer>
    </Page>
  );
}
